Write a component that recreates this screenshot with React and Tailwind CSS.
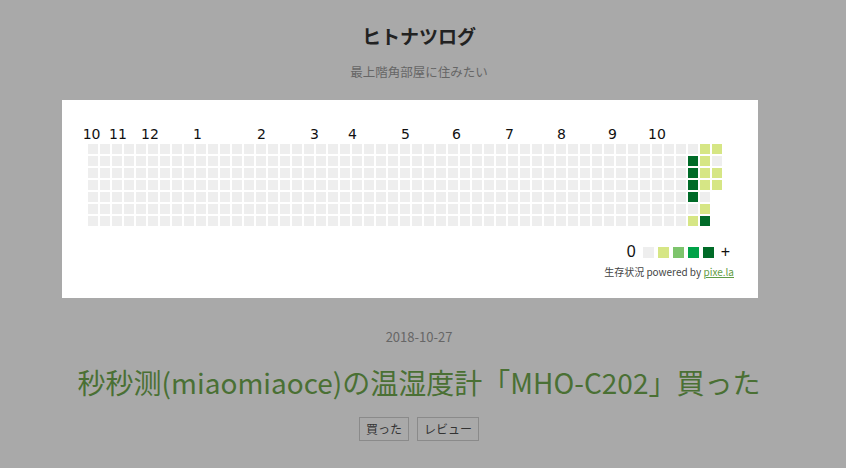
import React from 'react';

const jp = '"Noto Sans CJK JP", "Noto Sans", sans-serif';

const months = [
    { t: '10', x: 20.7 },
    { t: '11', x: 47 },
    { t: '12', x: 79 },
    { t: '1', x: 131 },
    { t: '2', x: 195 },
    { t: '3', x: 248 },
    { t: '4', x: 286 },
    { t: '5', x: 339 },
    { t: '6', x: 390 },
    { t: '7', x: 443 },
    { t: '8', x: 495 },
    { t: '9', x: 546 },
    { t: '10', x: 586 },
];

const colors = ['#eeeeee', '#d6e685', '#7dc46c', '#00a248', '#006b28'];

// last three weeks carry the recorded days
const tail = {
    50: [0, 4, 4, 4, 4, 0, 1],
    51: [1, 1, 1, 1, 0, 1, 4],
    52: [1, 0, 1, 1],
};

function Heatmap() {
    const cells = [];
    for (let c = 0; c < 53; c++) {
        const col = tail[c] || [0, 0, 0, 0, 0, 0, 0];
        col.forEach((v, r) => {
            cells.push(
                <rect key={c + '-' + r} x={26 + c * 12} y={44 + r * 12} width="10" height="10" fill={colors[v]} />
            );
        });
    }
    return (
        <svg width="696" height="130" viewBox="0 0 696 130" className="block">
            {months.map((m, i) => (
                <text key={i} x={m.x} y="39" fontSize="14" fontFamily="DejaVu Sans, sans-serif" fill="#111">
                    {m.t}
                </text>
            ))}
            {cells}
        </svg>
    );
}

export default function App() {
    return (
        <div className="min-h-[468px] w-full bg-[#a9a9a9]" style={{ fontFamily: jp }}>
            <div className="ml-[62px] w-[714px] flex flex-col items-center text-center">
                <h1 className="mt-[22px] h-[28px] leading-[28px] text-[19px] font-bold text-[#222]">ヒトナツログ</h1>
                <p className="mt-[12px] h-[20px] leading-[20px] text-[12.5px] text-[#666]">最上階角部屋に住みたい</p>

                <div className="mt-[18px] self-start w-[696px] h-[198px] bg-white flex flex-col">
                    <Heatmap />
                    <div className="mt-[16px] flex items-center justify-end pr-[28px] h-[12px]">
                        <span className="text-[16px] leading-none text-[#111] mr-[7px]" style={{ fontFamily: '"Liberation Sans", sans-serif' }}>0</span>
                        <div className="flex gap-[4px]">
                            {colors.map((c) => (
                                <span key={c} className="block w-[11px] h-[11px]" style={{ backgroundColor: c }} />
                            ))}
                        </div>
                        <span className="text-[16px] leading-none text-[#111] ml-[7px]" style={{ fontFamily: '"Liberation Sans", sans-serif' }}>+</span>
                    </div>
                    <div className="mt-[7px] pr-[24px] text-right text-[10px] leading-[14px] text-[#444]">
                        生存状況 powered by <a className="text-[#5f9c45] underline">pixe.la</a>
                    </div>
                </div>

                <div className="mt-[29px] h-[20px] leading-[20px] text-[13px] text-[#666]">2018-10-27</div>
                <h2 className="mt-[15px] h-[40px] leading-[40px] text-[28px] text-[#4a7034] whitespace-nowrap">
                    秒秒测(miaomiaoce)の温湿度計「MHO-C202」買った
                </h2>
                <div className="mt-[15px] flex gap-[8px]">
                    <span className="h-[24px] leading-[22px] px-[6px] border border-[#8a8a8a] text-[12px] text-[#333]">買った</span>
                    <span className="h-[24px] leading-[22px] px-[6px] border border-[#8a8a8a] text-[12px] text-[#333]">レビュー</span>
                </div>
            </div>
        </div>
    );
}
